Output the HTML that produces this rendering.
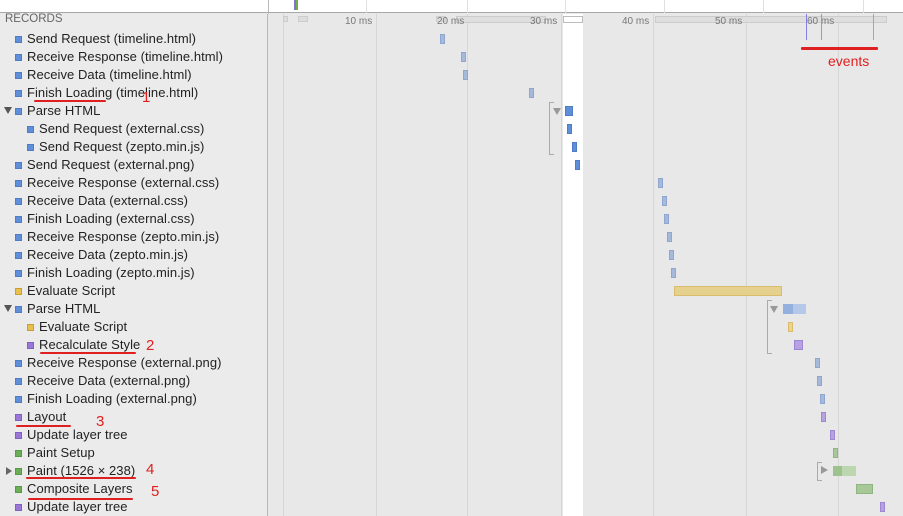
<!DOCTYPE html>
<html><head><meta charset="utf-8"><style>
*{margin:0;padding:0;box-sizing:border-box}
body{width:903px;height:516px;overflow:hidden;background:#e8e8e8;font-family:"Liberation Sans",sans-serif;position:relative}
.a{position:absolute}
#top{left:0;top:0;width:903px;height:13px;background:#fff;border-bottom:1px solid #a8a8a8}
#left{left:0;top:14px;width:268px;height:502px;background:#ebebeb;border-right:1px solid #b8b8b8}
.r{position:absolute;font-size:13px;letter-spacing:0.05px;color:#222;white-space:nowrap;line-height:14px}
.r i{position:absolute;width:7px;height:7px;top:4px;left:-12px}
.b{background:#5f8fd8;border:1px solid #4f7cc4}
.bl{background:#a4b9dc;border:1px solid #8fa6cf}
.g{position:absolute;top:14px;width:1px;height:502px;background:#d6d6d6}
.t{position:absolute;top:16px;font-size:10px;color:#777}
.bar{position:absolute;height:10px}
.red{position:absolute;height:2px;background:#e02020;border-radius:1px}
.n{position:absolute;color:#e02020;font-size:15px}
.tri{position:absolute;width:0;height:0}
</style></head><body>
<div id="top" class="a"></div>
<div class="a" style="left:268px;top:0;width:1px;height:14px;background:#b8b8b8"></div>
<div class="a" style="left:294px;top:0;width:2px;height:10px;background:#8a70c8"></div>
<div class="a" style="left:296px;top:0;width:2px;height:10px;background:#6db04a"></div>
<div class="a" style="left:366px;top:0;width:1px;height:13px;background:#e0e0e0"></div>
<div class="a" style="left:467px;top:0;width:1px;height:13px;background:#e0e0e0"></div>
<div class="a" style="left:565px;top:0;width:1px;height:13px;background:#e0e0e0"></div>
<div class="a" style="left:664px;top:0;width:1px;height:13px;background:#e0e0e0"></div>
<div class="a" style="left:763px;top:0;width:1px;height:13px;background:#e0e0e0"></div>
<div class="a" style="left:863px;top:0;width:1px;height:13px;background:#e0e0e0"></div>
<div id="left" class="a"></div>
<div class="a" style="left:5px;top:13px;font-size:11.5px;color:#666">RECORDS</div>

<div class="g" style="left:283px"></div>
<div class="g" style="left:376px"></div>
<div class="g" style="left:467px"></div>
<div class="g" style="left:561px"></div>
<div class="g" style="left:653px"></div>
<div class="g" style="left:746px"></div>
<div class="g" style="left:838px"></div>
<div class="a" style="left:563px;top:14px;width:20px;height:502px;background:#fff"></div>
<div class="a" style="left:283px;top:16px;width:5px;height:6px;border:1px solid #ccc;background:#ddd"></div>
<div class="a" style="left:298px;top:16px;width:10px;height:6px;border:1px solid #ccc;background:#ddd"></div>
<div class="a" style="left:436px;top:16px;width:10px;height:6px;border:1px solid #ccc;background:#ddd"></div>
<div class="a" style="left:456px;top:16px;width:90px;height:7px;border:1px solid #ccc;background:#dedede"></div>
<div class="a" style="left:563px;top:16px;width:20px;height:7px;border:1px solid #bbb;background:#fff"></div>
<div class="a" style="left:655px;top:16px;width:232px;height:7px;border:1px solid #ccc;background:#dedede"></div>
<div class="t" style="left:345px">10 ms</div>
<div class="t" style="left:437px">20 ms</div>
<div class="t" style="left:530px">30 ms</div>
<div class="t" style="left:622px">40 ms</div>
<div class="t" style="left:715px">50 ms</div>
<div class="t" style="left:807px">60 ms</div>
<div class="a" style="left:806px;top:14px;width:1px;height:26px;background:#8080e0"></div>
<div class="a" style="left:821px;top:14px;width:1px;height:26px;background:#e08080"></div>
<div class="a" style="left:873px;top:14px;width:1px;height:26px;background:#80c080"></div>
<div class="red" style="left:801px;top:47px;width:77px;height:3px"></div>
<div class="n" style="left:828px;top:53px;font-size:14px">events</div>

<div class="r" style="left:27px;top:32px"><i class="b"></i>Send Request (timeline.html)</div>
<div class="r" style="left:27px;top:50px"><i class="b"></i>Receive Response (timeline.html)</div>
<div class="r" style="left:27px;top:68px"><i class="b"></i>Receive Data (timeline.html)</div>
<div class="r" style="left:27px;top:86px"><i class="b"></i>Finish Loading (timeline.html)</div>
<div class="r" style="left:27px;top:104px"><i class="b"></i>Parse HTML</div>
<div class="r" style="left:39px;top:122px"><i class="b"></i>Send Request (external.css)</div>
<div class="r" style="left:39px;top:140px"><i class="b"></i>Send Request (zepto.min.js)</div>
<div class="r" style="left:27px;top:158px"><i class="b"></i>Send Request (external.png)</div>
<div class="r" style="left:27px;top:176px"><i class="b"></i>Receive Response (external.css)</div>
<div class="r" style="left:27px;top:194px"><i class="b"></i>Receive Data (external.css)</div>
<div class="r" style="left:27px;top:212px"><i class="b"></i>Finish Loading (external.css)</div>
<div class="r" style="left:27px;top:230px"><i class="b"></i>Receive Response (zepto.min.js)</div>
<div class="r" style="left:27px;top:248px"><i class="b"></i>Receive Data (zepto.min.js)</div>
<div class="r" style="left:27px;top:266px"><i class="b"></i>Finish Loading (zepto.min.js)</div>
<div class="r" style="left:27px;top:284px"><i style="background:#e8c050;border:1px solid #c9a030"></i>Evaluate Script</div>
<div class="r" style="left:27px;top:302px"><i class="b"></i>Parse HTML</div>
<div class="r" style="left:39px;top:320px"><i style="background:#e8c050;border:1px solid #c9a030"></i>Evaluate Script</div>
<div class="r" style="left:39px;top:338px"><i style="background:#9a78d8;border:1px solid #8060c0"></i>Recalculate Style</div>
<div class="r" style="left:27px;top:356px"><i class="b"></i>Receive Response (external.png)</div>
<div class="r" style="left:27px;top:374px"><i class="b"></i>Receive Data (external.png)</div>
<div class="r" style="left:27px;top:392px"><i class="b"></i>Finish Loading (external.png)</div>
<div class="r" style="left:27px;top:410px"><i style="background:#9a78d8;border:1px solid #8060c0"></i>Layout</div>
<div class="r" style="left:27px;top:428px"><i style="background:#9a78d8;border:1px solid #8060c0"></i>Update layer tree</div>
<div class="r" style="left:27px;top:446px"><i style="background:#6cae58;border:1px solid #559a44"></i>Paint Setup</div>
<div class="r" style="left:27px;top:464px"><i style="background:#6cae58;border:1px solid #559a44"></i>Paint (1526 × 238)</div>
<div class="r" style="left:27px;top:482px"><i style="background:#6cae58;border:1px solid #559a44"></i>Composite Layers</div>
<div class="r" style="left:27px;top:500px"><i style="background:#9a78d8;border:1px solid #8060c0"></i>Update layer tree</div>
<div class="tri" style="left:4px;top:107px;border-left:4px solid transparent;border-right:4px solid transparent;border-top:7px solid #555"></div>
<div class="tri" style="left:4px;top:305px;border-left:4px solid transparent;border-right:4px solid transparent;border-top:7px solid #555"></div>
<div class="tri" style="left:6px;top:467px;border-top:4px solid transparent;border-bottom:4px solid transparent;border-left:6px solid #666"></div>

<div class="red" style="left:34px;top:100px;width:72px"></div>
<div class="n" style="left:142px;top:89px">1</div>
<div class="red" style="left:40px;top:352px;width:96px"></div>
<div class="n" style="left:146px;top:337px">2</div>
<div class="red" style="left:16px;top:425px;width:55px"></div>
<div class="n" style="left:96px;top:413px">3</div>
<div class="red" style="left:26px;top:477px;width:110px"></div>
<div class="n" style="left:146px;top:461px">4</div>
<div class="red" style="left:28px;top:498px;width:105px"></div>
<div class="n" style="left:151px;top:483px">5</div>

<div class="bar bl" style="left:440px;top:34px;width:5px"></div>
<div class="bar bl" style="left:461px;top:52px;width:5px"></div>
<div class="bar bl" style="left:463px;top:70px;width:5px"></div>
<div class="bar bl" style="left:529px;top:88px;width:5px"></div>
<div class="a" style="left:549px;top:102px;width:5px;height:53px;border:1px solid #aaa;border-right:none"></div>
<div class="tri" style="left:553px;top:108px;border-left:4px solid transparent;border-right:4px solid transparent;border-top:7px solid #999"></div>
<div class="bar b" style="left:565px;top:106px;width:8px"></div>
<div class="bar b" style="left:567px;top:124px;width:5px"></div>
<div class="bar b" style="left:572px;top:142px;width:5px"></div>
<div class="bar b" style="left:575px;top:160px;width:5px"></div>
<div class="bar bl" style="left:658px;top:178px;width:5px"></div>
<div class="bar bl" style="left:662px;top:196px;width:5px"></div>
<div class="bar bl" style="left:664px;top:214px;width:5px"></div>
<div class="bar bl" style="left:667px;top:232px;width:5px"></div>
<div class="bar bl" style="left:669px;top:250px;width:5px"></div>
<div class="bar bl" style="left:671px;top:268px;width:5px"></div>
<div class="bar" style="left:674px;top:286px;width:108px;background:#e6d08e;border:1px solid #d9bd6c"></div>
<div class="a" style="left:767px;top:300px;width:5px;height:54px;border:1px solid #aaa;border-right:none"></div>
<div class="tri" style="left:770px;top:306px;border-left:4px solid transparent;border-right:4px solid transparent;border-top:7px solid #999"></div>
<div class="bar" style="left:783px;top:304px;width:23px;background:#b5c8e8"></div>
<div class="bar" style="left:783px;top:304px;width:10px;background:#94b0df"></div>
<div class="bar" style="left:788px;top:322px;width:5px;background:#ecd58a;border:1px solid #d9bd6c"></div>
<div class="bar" style="left:794px;top:340px;width:9px;background:#b6a2e0;border:1px solid #9d86d2"></div>
<div class="bar bl" style="left:815px;top:358px;width:5px"></div>
<div class="bar bl" style="left:817px;top:376px;width:5px"></div>
<div class="bar bl" style="left:820px;top:394px;width:5px"></div>
<div class="bar" style="left:821px;top:412px;width:5px;background:#b6a2e0;border:1px solid #9d86d2"></div>
<div class="bar" style="left:830px;top:430px;width:5px;background:#b6a2e0;border:1px solid #9d86d2"></div>
<div class="bar" style="left:833px;top:448px;width:5px;background:#a8c89a;border:1px solid #8eb67e"></div>
<div class="a" style="left:817px;top:462px;width:5px;height:19px;border:1px solid #aaa;border-right:none"></div>
<div class="tri" style="left:821px;top:466px;border-top:4px solid transparent;border-bottom:4px solid transparent;border-left:7px solid #999"></div>
<div class="bar" style="left:833px;top:466px;width:23px;background:#bcd6b0"></div>
<div class="bar" style="left:833px;top:466px;width:9px;background:#9ec28e"></div>
<div class="bar" style="left:856px;top:484px;width:17px;background:#a8c89a;border:1px solid #8eb67e"></div>
<div class="bar" style="left:880px;top:502px;width:5px;background:#b6a2e0;border:1px solid #9d86d2"></div>
</body></html>
